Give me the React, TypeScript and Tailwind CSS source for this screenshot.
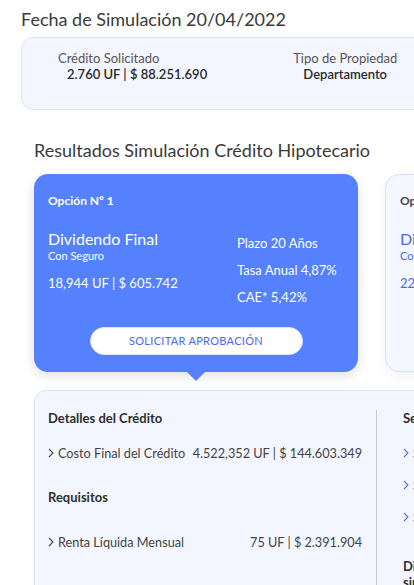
import React from "react";

const font = { fontFamily: "Lato, 'Noto Sans', sans-serif" };

function Chevron({ color = "#444" }: { color?: string }) {
  return (
    <svg width="6" height="10" viewBox="0 0 6 10" className="mr-[4px] shrink-0">
      <path d="M1 1 L5 5 L1 9" fill="none" stroke={color} strokeWidth="1.1" />
    </svg>
  );
}

export default function App() {
  return (
    <div
      className="w-[414px] h-[585px] overflow-hidden bg-white font-['Lato','Noto_Sans',sans-serif]"
      style={font}
    >
      <div className="w-[900px]">
        <div className="pl-[21px] pt-[7px]">
          <h1 className="text-[18px] leading-[24px] text-[#3a3a3a] font-normal">
            Fecha de Simulación 20/04/2022
          </h1>
          <div className="mt-[6px] h-[73px] w-[480px] rounded-[12px] border border-[#dde3f7] bg-[#f3f6fe] flex pt-[12px]">
            <div className="ml-[36px] flex flex-col">
              <span className="text-[13px] leading-[16px] text-[#555]">Crédito Solicitado</span>
              <span className="text-[13px] leading-[16px] text-[#2a2a2a] font-semibold pl-[9px]">
                2.760 UF | $ 88.251.690
              </span>
            </div>
            <div className="ml-[86px] flex flex-col items-center">
              <span className="text-[13px] leading-[16px] text-[#555]">Tipo de Propiedad</span>
              <span className="text-[13px] leading-[16px] text-[#2a2a2a] font-semibold">Departamento</span>
            </div>
          </div>
        </div>

        <div className="pl-[34px]">
          <h2 className="mt-[28px] text-[18px] leading-[24px] text-[#3a3a3a] font-normal">
            Resultados Simulación Crédito Hipotecario
          </h2>

          <div className="mt-[12px] flex gap-[27px]">
            <div className="relative w-[324px] h-[198px] rounded-[14px] bg-[#5581ff] shadow-[0_4px_12px_rgba(0,0,0,0.12)] px-[14px] pt-[19px] text-white">
              <div className="text-[12px] leading-[16px] font-bold">Opción Nº 1</div>
              <div className="mt-[20px] flex">
                <div className="w-[189px] flex flex-col">
                  <span className="text-[16px] leading-[20px]">Dividendo Final</span>
                  <span className="text-[11px] leading-[14px]">Con Seguro</span>
                  <span className="mt-[11px] text-[13px] leading-[18px]">18,944 UF | $ 605.742</span>
                </div>
                <div className="mt-[5px] flex flex-col gap-[9px] text-[13px] leading-[18px]">
                  <span>Plazo 20 Años</span>
                  <span>Tasa Anual 4,87%</span>
                  <span>CAE* 5,42%</span>
                </div>
              </div>
              <div className="mt-[21px] flex justify-center">
                <button className="w-[213px] h-[28px] rounded-full bg-white border border-[#dfe5f7] text-[11px] text-[#4a68f0] tracking-[0.3px]">
                  SOLICITAR APROBACIÓN
                </button>
              </div>
              <div className="absolute left-[153px] -bottom-[9px] w-0 h-0 border-l-[9px] border-r-[9px] border-t-[9px] border-l-transparent border-r-transparent border-t-[#5581ff]" />
            </div>

            <div className="w-[324px] h-[198px] rounded-[14px] bg-[#f4f7fe] border border-[#d9e0f8] shadow-[0_4px_12px_rgba(0,0,0,0.06)] px-[14px] pt-[18px]">
              <div className="text-[12px] leading-[16px] font-bold text-[#444]">Opción Nº 2</div>
              <div className="mt-[20px] flex flex-col text-[#4a68f0]">
                <span className="text-[16px] leading-[20px]">Dividendo Final</span>
                <span className="text-[11px] leading-[14px]">Con Seguro</span>
                <span className="mt-[11px] text-[13px] leading-[18px]">22,104 UF | $ 706.790</span>
              </div>
            </div>
          </div>

          <div className="mt-[18px] w-[700px] h-[300px] rounded-[12px] border border-[#dde3f7] bg-[#f3f6fe] flex pl-[13px] pt-[18px]">
            <div className="w-[314px] flex flex-col text-[#444]">
              <span className="text-[13px] leading-[18px] font-bold text-[#2e2e2e]">Detalles del Crédito</span>
              <div className="mt-[17px] flex items-center justify-between text-[12.7px] leading-[18px]">
                <span className="flex items-center"><Chevron />Costo Final del Crédito</span>
                <span>4.522,352 UF | $ 144.603.349</span>
              </div>
              <span className="mt-[26px] text-[13px] leading-[18px] font-bold text-[#2e2e2e]">Requisitos</span>
              <div className="mt-[27px] flex items-center justify-between text-[12.7px] leading-[18px]">
                <span className="flex items-center"><Chevron />Renta Líquida Mensual</span>
                <span>75 UF | $ 2.391.904</span>
              </div>
            </div>
            <div className="ml-[14px] mt-[1px] w-px bg-[#c9ccd6] self-stretch" />
            <div className="ml-[26px] flex flex-col text-[#444]">
              <span className="text-[13px] leading-[18px] font-bold text-[#2e2e2e]">Seguros</span>
              <div className="mt-[17px] flex flex-col gap-[14px] text-[12.7px] leading-[18px]">
                <span className="flex items-center"><Chevron color="#5a73c8" />Seguro de Desgravamen</span>
                <span className="flex items-center"><Chevron color="#5a73c8" />Seguro de Incendio</span>
                <span className="flex items-center"><Chevron color="#5a73c8" />Seguro de Sismo</span>
              </div>
              <span className="mt-[32px] text-[13px] leading-[16px] font-bold text-[#2e2e2e]">
                Dividendo Final
                <br />
                sin Seguros
              </span>
            </div>
          </div>
        </div>
      </div>
    </div>
  );
}
